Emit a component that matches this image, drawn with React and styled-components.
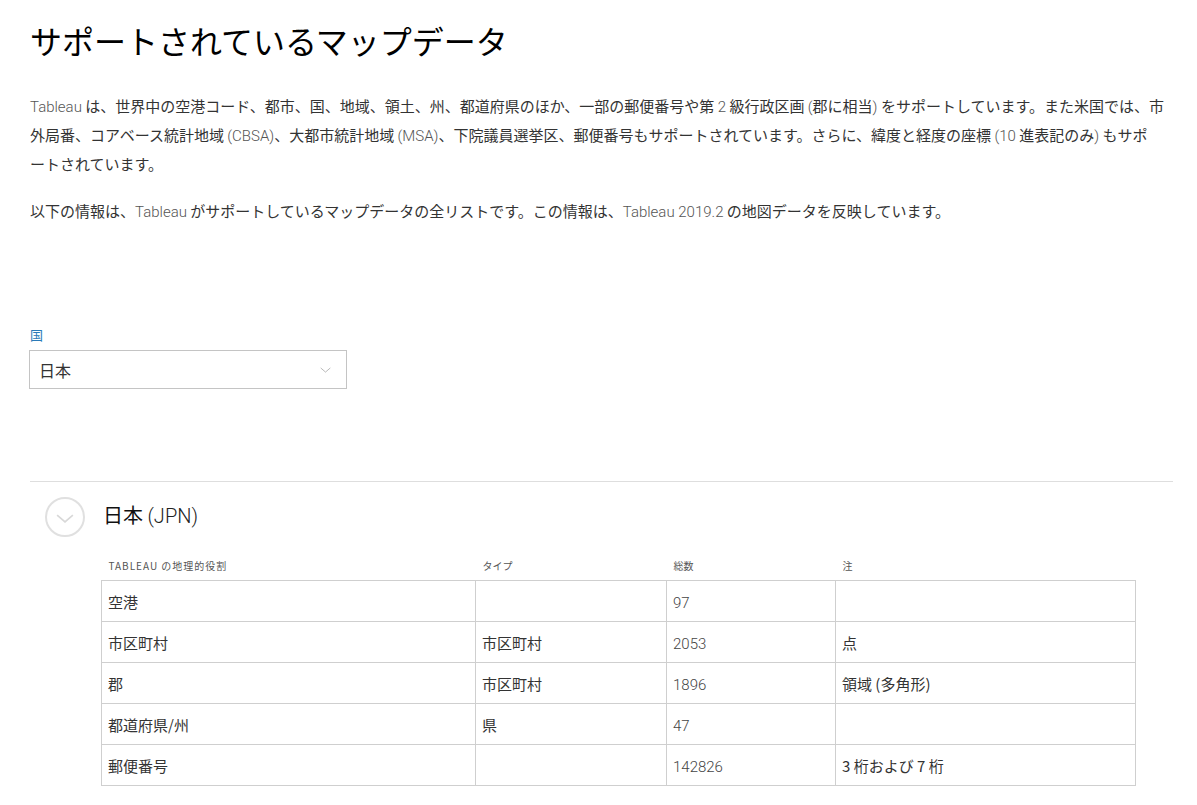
import React from "react";
import styled, { createGlobalStyle } from "styled-components";

const Global = createGlobalStyle`
  html, body { margin: 0; padding: 0; background: #fff; }
  body {
    font-family: "Noto Sans CJK JP", "Noto Sans", sans-serif;
    color: #333;
  }
`;

const Page = styled.main`
  padding: 18px 24px 0 30px;
  box-sizing: border-box;
  width: 1197px;
`;

const Title = styled.h1`
  margin: 0;
  font-size: 32px;
  line-height: 44px;
  font-weight: 400;
  color: #000;
`;

const Para = styled.p`
  margin: ${(p) => p.$top}px 0 0;
  font-size: 15px;
  line-height: 29px;
  color: #333;
  white-space: nowrap;
`;

const Latin = styled.span`
  color: #555;
  font-family: "Roboto", "Noto Sans CJK JP", sans-serif;
  font-weight: 300;
  line-height: 1;
`;

const FieldLabel = styled.label`
  display: block;
  margin-top: 101px;
  font-size: 13px;
  line-height: 18px;
  color: #2a7ab8;
`;

const Select = styled.div`
  margin-top: 6px;
  margin-left: -1px;
  width: 318px;
  height: 39px;
  box-sizing: border-box;
  border: 1px solid #c4c4c4;
  display: flex;
  align-items: center;
  justify-content: space-between;
  padding: 0 15px 0 9px;
  font-size: 16px;
  color: #333;
`;

const Rule = styled.hr`
  margin: 92px 0 0;
  border: 0;
  border-top: 1px solid #dedede;
  width: 1143px;
`;

const SectionHead = styled.div`
  display: flex;
  align-items: center;
  gap: 18px;
  margin-top: 15px;
  padding-left: 15px;
`;

const CircleToggle = styled.div`
  width: 40px;
  height: 40px;
  box-sizing: border-box;
  border: 2px solid #e0e0e0;
  border-radius: 50%;
  display: flex;
  align-items: center;
  justify-content: center;
  padding-top: 3px;
`;

const SectionTitle = styled.h2`
  margin: 0 0 4px;
  font-size: 20px;
  font-weight: 400;
  color: #111;
  line-height: 28px;
`;

const TableWrap = styled.div`
  padding-left: 71px;
  margin-top: 22px;
`;

const Table = styled.table`
  border-collapse: collapse;
  width: 1034px;
  table-layout: fixed;
`;

const Col = styled.col`
  width: ${(p) => p.$w}px;
`;

const Th = styled.th`
  text-align: left;
  font-weight: 400;
  font-size: 10px;
  line-height: 14px;
  color: #555;
  padding: 0 7px 7px;
  letter-spacing: ${(p) => (p.$spaced ? "1px" : "0")};
`;

const Td = styled.td`
  border: 1px solid #cfcfcf;
  height: 41px;
  box-sizing: border-box;
  padding: 0 6px;
  font-size: 15px;
  color: #333;
  vertical-align: middle;
`;

const Num = styled.span`
  font-family: "Roboto", "Noto Sans CJK JP", sans-serif;
  font-weight: 300;
  color: #444;
`;

const Chevron = ({ w, h, color, sw }) => (
  <svg width={w} height={h} viewBox="0 0 16 8" fill="none">
    <polyline points="1,1 8,7 15,1" stroke={color} strokeWidth={sw} />
  </svg>
);

const rows = [
  ["空港", "", "97", ""],
  ["市区町村", "市区町村", "2053", "点"],
  ["郡", "市区町村", "1896", "領域 (多角形)"],
  ["都道府県/州", "県", "47", ""],
  ["郵便番号", "", "142826", "3 桁および 7 桁"],
];

export default function App() {
  return (
    <>
      <Global />
      <Page>
        <Title>サポートされているマップデータ</Title>
        <Para $top={29}>
          <Latin>Tableau</Latin> は、世界中の空港コード、都市、国、地域、領土、州、都道府県のほか、一部の郵便番号や第 <Latin>2</Latin> 級行政区画 <Latin>(</Latin>郡に相当<Latin>)</Latin> をサポートしています。また米国では、市
          <br />
          外局番、コアベース統計地域 <Latin>(CBSA)</Latin>、大都市統計地域 <Latin>(MSA)</Latin>、下院議員選挙区、郵便番号もサポートされています。さらに、緯度と経度の座標 <Latin>(10</Latin> 進表記のみ<Latin>)</Latin> もサポ
          <br />
          ートされています。
        </Para>
        <Para $top={18}>
          以下の情報は、<Latin>Tableau</Latin> がサポートしているマップデータの全リストです。この情報は、<Latin>Tableau 2019.2</Latin> の地図データを反映しています。
        </Para>
        <FieldLabel>国</FieldLabel>
        <Select>
          <span>日本</span>
          <Chevron w={11} h={6} color="#999" sw={1} />
        </Select>
        <Rule />
        <SectionHead>
          <CircleToggle>
            <Chevron w={18} h={9} color="#d8d8d8" sw={1.5} />
          </CircleToggle>
          <SectionTitle>
            日本 <Latin style={{ color: "#222" }}>(JPN)</Latin>
          </SectionTitle>
        </SectionHead>
        <TableWrap>
          <Table>
            <colgroup>
              <Col $w={374} />
              <Col $w={191} />
              <Col $w={169} />
              <Col $w={300} />
            </colgroup>
            <thead>
              <tr>
                <Th $spaced>TABLEAU の地理的役割</Th>
                <Th>タイプ</Th>
                <Th>総数</Th>
                <Th>注</Th>
              </tr>
            </thead>
            <tbody>
              {rows.map((r) => (
                <tr key={r[0]}>
                  <Td>{r[0]}</Td>
                  <Td>{r[1]}</Td>
                  <Td>
                    <Num>{r[2]}</Num>
                  </Td>
                  <Td>{r[3]}</Td>
                </tr>
              ))}
            </tbody>
          </Table>
        </TableWrap>
      </Page>
    </>
  );
}
